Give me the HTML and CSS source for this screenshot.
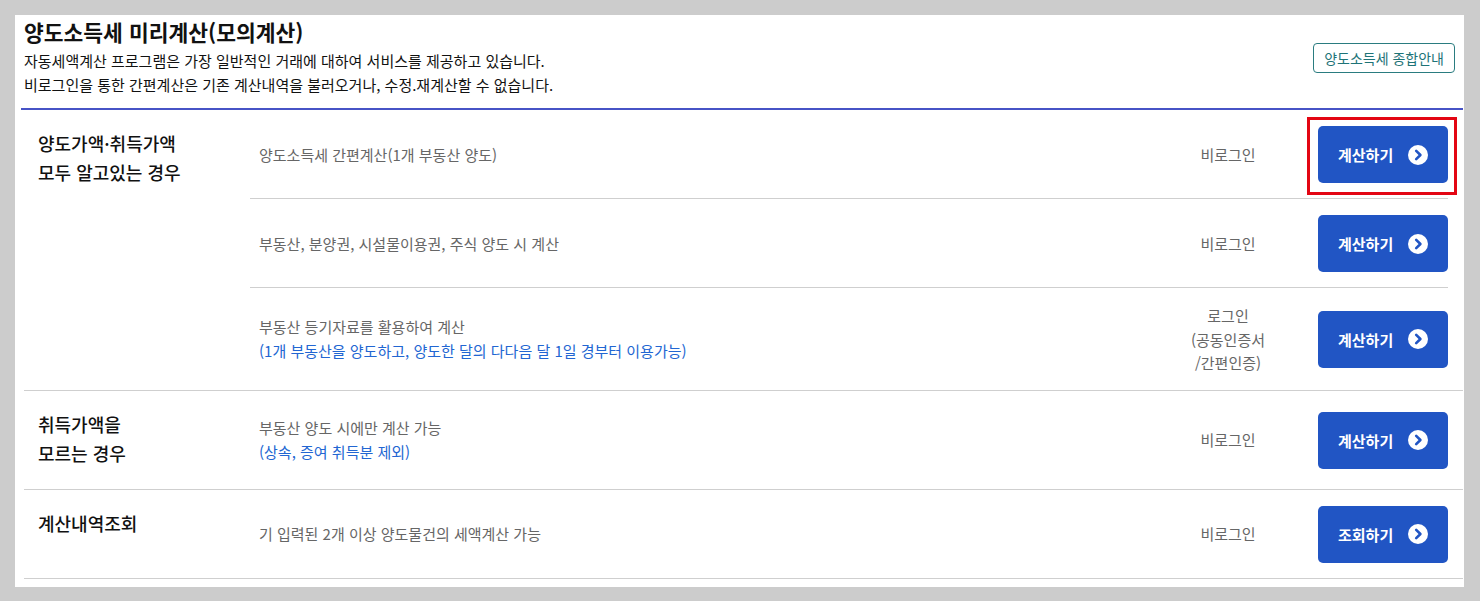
FILE: index.html
```html
<!DOCTYPE html>
<html lang="ko">
<head>
<meta charset="utf-8">
<title>양도소득세 미리계산</title>
<link rel="stylesheet" href="styles.css">
</head>
<body>
<div class="panel">
  <div class="header">
    <div class="intro">
      <h1 class="title">양도소득세 미리계산(모의계산)</h1>
      <p class="intro-text">자동세액계산 프로그램은 가장 일반적인 거래에 대하여 서비스를 제공하고 있습니다.<br>비로그인을 통한 간편계산은 기존 계산내역을 불러오거나, 수정.재계산할 수 없습니다.</p>
    </div>
    <a class="guide-btn" href="#">양도소득세 종합안내</a>
  </div>

  <div class="group">
    <div class="group-label">양도가액·취득가액<br>모두 알고있는 경우</div>
    <div class="items">
      <div class="item">
        <div class="item-desc">양도소득세 간편계산(1개 부동산 양도)</div>
        <div class="item-login">비로그인</div>
        <div class="item-action"><a class="calc-btn highlighted" href="#">계산하기<span class="arrow"><svg viewBox="0 0 20 20" width="20" height="20"><circle cx="10" cy="10" r="10" fill="#fff"/><path d="M8.2 5.8 L12.4 10 L8.2 14.2" fill="none" stroke="#2155c4" stroke-width="2.6" stroke-linecap="round" stroke-linejoin="round"/></svg></span></a></div>
      </div>
      <div class="item">
        <div class="item-desc">부동산, 분양권, 시설물이용권, 주식 양도 시 계산</div>
        <div class="item-login">비로그인</div>
        <div class="item-action"><a class="calc-btn" href="#">계산하기<span class="arrow"><svg viewBox="0 0 20 20" width="20" height="20"><circle cx="10" cy="10" r="10" fill="#fff"/><path d="M8.2 5.8 L12.4 10 L8.2 14.2" fill="none" stroke="#2155c4" stroke-width="2.6" stroke-linecap="round" stroke-linejoin="round"/></svg></span></a></div>
      </div>
      <div class="item">
        <div class="item-desc">부동산 등기자료를 활용하여 계산<br><span class="note">(1개 부동산을 양도하고, 양도한 달의 다다음 달 1일 경부터 이용가능)</span></div>
        <div class="item-login">로그인<br>(공동인증서<br>/간편인증)</div>
        <div class="item-action"><a class="calc-btn" href="#">계산하기<span class="arrow"><svg viewBox="0 0 20 20" width="20" height="20"><circle cx="10" cy="10" r="10" fill="#fff"/><path d="M8.2 5.8 L12.4 10 L8.2 14.2" fill="none" stroke="#2155c4" stroke-width="2.6" stroke-linecap="round" stroke-linejoin="round"/></svg></span></a></div>
      </div>
    </div>
  </div>

  <div class="group">
    <div class="group-label">취득가액을<br>모르는 경우</div>
    <div class="items">
      <div class="item">
        <div class="item-desc">부동산 양도 시에만 계산 가능<br><span class="note">(상속, 증여 취득분 제외)</span></div>
        <div class="item-login">비로그인</div>
        <div class="item-action"><a class="calc-btn" href="#">계산하기<span class="arrow"><svg viewBox="0 0 20 20" width="20" height="20"><circle cx="10" cy="10" r="10" fill="#fff"/><path d="M8.2 5.8 L12.4 10 L8.2 14.2" fill="none" stroke="#2155c4" stroke-width="2.6" stroke-linecap="round" stroke-linejoin="round"/></svg></span></a></div>
      </div>
    </div>
  </div>

  <div class="group">
    <div class="group-label">계산내역조회</div>
    <div class="items">
      <div class="item">
        <div class="item-desc">기 입력된 2개 이상 양도물건의 세액계산 가능</div>
        <div class="item-login">비로그인</div>
        <div class="item-action"><a class="calc-btn" href="#">조회하기<span class="arrow"><svg viewBox="0 0 20 20" width="20" height="20"><circle cx="10" cy="10" r="10" fill="#fff"/><path d="M8.2 5.8 L12.4 10 L8.2 14.2" fill="none" stroke="#2155c4" stroke-width="2.6" stroke-linecap="round" stroke-linejoin="round"/></svg></span></a></div>
      </div>
    </div>
  </div>
</div>
</body>
</html>
```

FILE: styles.css
```css
* { box-sizing: border-box; }
html, body { margin: 0; }
body {
  background: #cccccc;
  padding: 15px 16px 15px 15px;
  font-family: "Noto Sans CJK KR", "Malgun Gothic", "Noto Sans", sans-serif;
  color: #111;
}
a { text-decoration: none; }

.panel {
  background: #fff;
  padding: 3px 1px 8px 6px;
}

.header {
  display: flex;
  align-items: center;
  justify-content: space-between;
  padding: 0 8px 11px 3px;
  border-bottom: 2px solid #4753c6;
}
.title {
  margin: 0;
  font-size: 21.5px;
  font-weight: 700;
  line-height: 28px;
  color: #111;
}
.intro-text {
  margin: 3px 0 0;
  font-size: 15px;
  line-height: 24px;
  color: #111;
}
.guide-btn {
  display: inline-block;
  height: 30px;
  line-height: 28px;
  padding: 0 10px;
  border: 1px solid #2a7c80;
  border-radius: 4px;
  font-size: 14px;
  color: #1e7377;
  white-space: nowrap;
}

.group {
  display: flex;
  margin-left: 3px;
  border-bottom: 1px solid #cfcfcf;
}
.group-label {
  width: 226px;
  flex: none;
  padding: 19px 0 21px 14px;
  font-size: 18px;
  font-weight: 500;
  line-height: 29px;
  color: #111;
}
.items {
  flex: 1;
  display: flex;
  flex-direction: column;
  margin-right: 15px;
}
.item {
  flex: 1;
  display: flex;
  align-items: center;
  padding: 16px 0 15px;
  border-bottom: 1px solid #cfcfcf;
}
.item:last-child { border-bottom: none; }

.item-desc {
  flex: 1;
  padding-left: 9px;
  font-size: 15px;
  line-height: 24px;
  color: #666;
}
.note { color: #2266d2; }

.item-login {
  width: 120px;
  flex: none;
  text-align: center;
  font-size: 15px;
  line-height: 23.6px;
  color: #666;
}
.item-action {
  flex: none;
  margin-left: 30px;
}
.calc-btn {
  display: flex;
  align-items: center;
  width: 130px;
  height: 57px;
  padding-left: 20px;
  border-radius: 5px;
  background: #2155c4;
  color: #fff;
  font-size: 15px;
  font-weight: 700;
}
.calc-btn .arrow {
  display: flex;
  margin-left: 15px;
}
.highlighted { position: relative; }
.highlighted::after {
  content: "";
  position: absolute;
  top: -9px;
  right: -9px;
  bottom: -12px;
  left: -11px;
  border: 3px solid #e30613;
  pointer-events: none;
}
```
